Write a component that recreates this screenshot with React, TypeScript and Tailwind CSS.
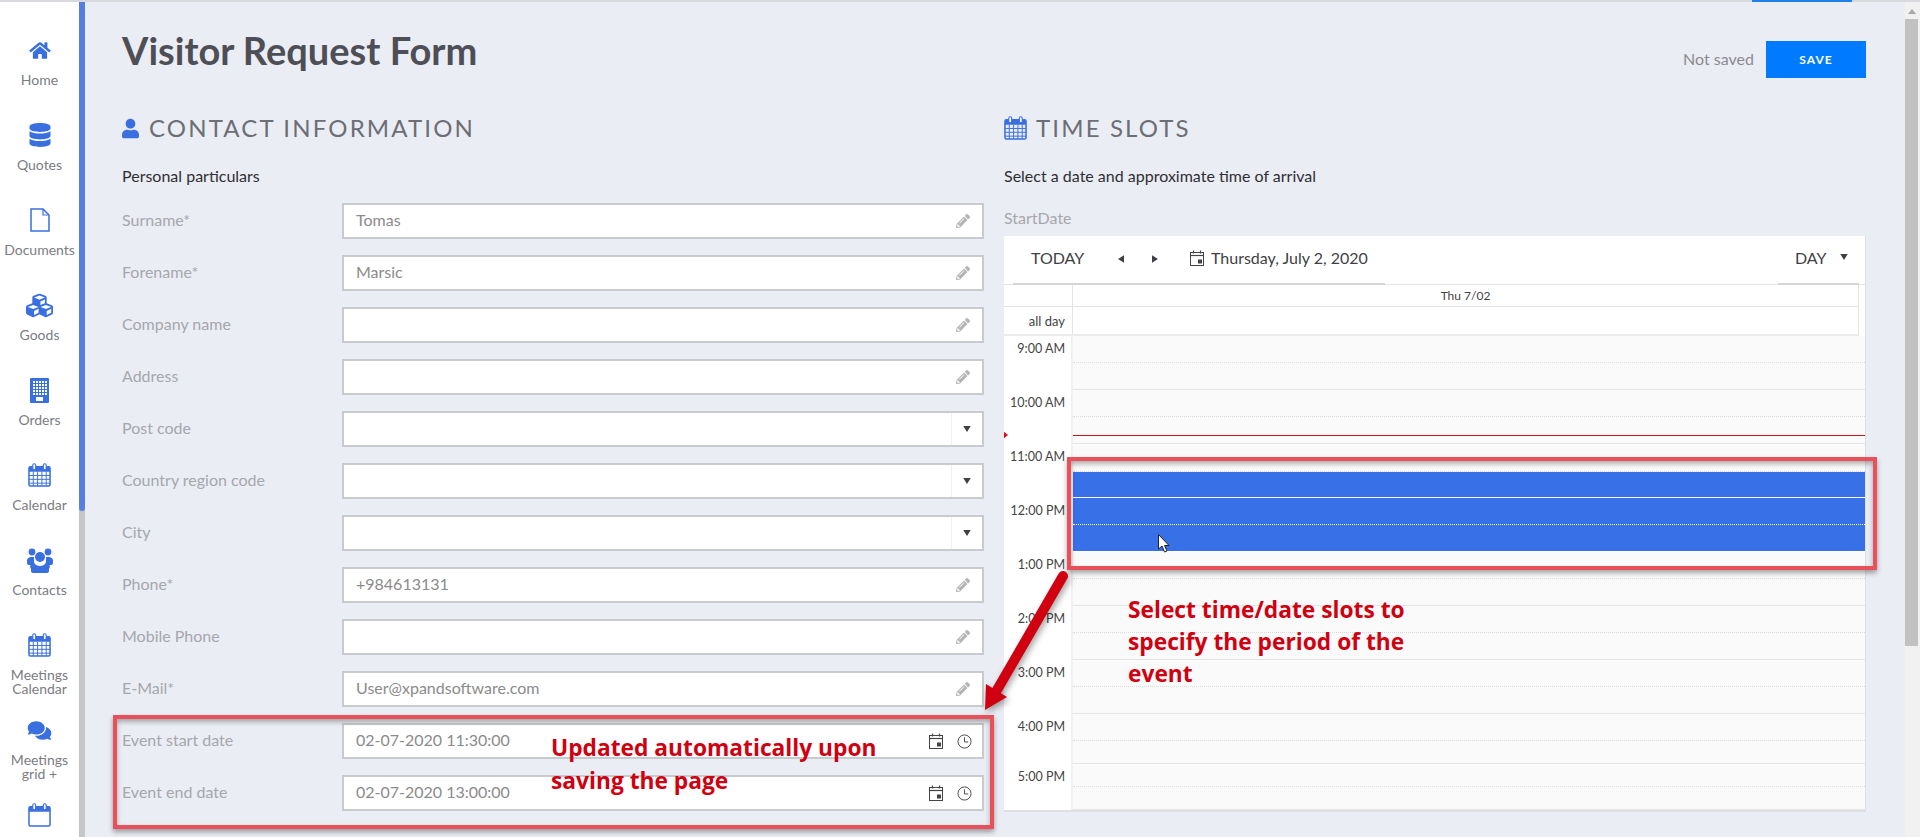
import type { ReactNode } from "react";
import { FaComments, FaCubes, FaDatabase, FaHome, FaPencilAlt, FaUser } from "react-icons/fa";

function CalendarGrid({ className, blank }: { className: string; blank?: boolean }) {
  return (
    <svg viewBox="0 0 24 25" className={className} fill="none" stroke="currentColor">
      <rect x="1" y="4" width="22" height="20" rx="1.5" strokeWidth="1.6" />
      <path d="M1 5.5a1.5 1.5 0 0 1 1.5-1.5h19A1.5 1.5 0 0 1 23 5.5V9H1z" fill="currentColor" stroke="none" />
      <rect x="5" y="0.8" width="3" height="6.4" rx="1.4" fill="white" strokeWidth="1.2" />
      <rect x="16" y="0.8" width="3" height="6.4" rx="1.4" fill="white" strokeWidth="1.2" />
      {!blank && (
        <path
          d="M1 13h22M1 17h22M1 21h22M5.5 9v15M10 9v15M14.5 9v15M19 9v15"
          strokeWidth="1"
        />
      )}
    </svg>
  );
}

function FileIcon() {
  return (
    <svg viewBox="0 0 20 24" className="w-[20px] h-[24px]" fill="none" stroke="currentColor" strokeWidth="1.5">
      <path d="M1 1h12l6 6v16H1z" />
      <path d="M13 1v6h6" strokeWidth="1.2" />
    </svg>
  );
}

function BuildingIcon() {
  const cols = [4, 7, 10, 13, 16];
  const rows = [3, 6, 9, 12, 15];
  return (
    <svg viewBox="0 0 19 25" className="w-[19px] h-[25px]">
      <rect width="19" height="25" rx="1" fill="currentColor" />
      {rows.map((y) =>
        cols.map((x) => <rect key={`${x}-${y}`} x={x - 1} y={y} width="2" height="2" fill="white" />),
      )}
      <rect x="6" y="19" width="7" height="4" fill="white" />
    </svg>
  );
}

function UsersIcon() {
  return (
    <svg viewBox="0 0 26 25" className="w-[26px] h-[25px]" fill="currentColor">
      <circle cx="5" cy="4" r="3.4" />
      <circle cx="21" cy="4" r="3.4" />
      <path d="M0 14a4 4 0 0 1 4-5h3v5a5 5 0 0 0 1 3H2a2 2 0 0 1-2-2zM26 14a4 4 0 0 0-4-5h-3v5a5 5 0 0 1-1 3h6a2 2 0 0 0 2-2z" />
      <circle cx="13" cy="9" r="5" />
      <path d="M4 21a4 4 0 0 1 3-6.500c1 2 3 3.500 6 3.500s5-1.500 6-3.500a4 4 0 0 1 3 6.500v2a2 2 0 0 1-2 2H6a2 2 0 0 1-2-2z" />
    </svg>
  );
}

function DateIcon({ className }: { className: string }) {
  return (
    <svg viewBox="0 0 14 16" className={className} fill="none" stroke="#444">
      <rect x="0.5" y="2.5" width="13" height="13" strokeWidth="1" />
      <path d="M0.5 5.5h13" strokeWidth="1.2" />
      <path d="M3.5 0.5v3M10.5 0.5v3" strokeWidth="1.2" />
      <rect x="8" y="9.500" width="4" height="4" fill="#444" stroke="none" />
    </svg>
  );
}

function ClockIcon() {
  return (
    <svg viewBox="0 0 16 16" className="w-[15px] h-[15px]" fill="none" stroke="#444">
      <circle cx="8" cy="8" r="7" strokeWidth="1" />
      <path d="M8 3.500V8.500h4" strokeWidth="1" />
    </svg>
  );
}

function Triangle({ dir, className }: { dir: "down" | "left" | "right"; className: string }) {
  const points = dir === "down" ? "0,0 10,0 5,8" : dir === "left" ? "8,0 8,10 0,5" : "0,0 8,5 0,10";
  const box = dir === "down" ? "0 0 10 8" : "0 0 8 10";
  return (
    <svg viewBox={box} className={className}>
      <polygon points={points} fill="#3f3f46" />
    </svg>
  );
}

const navItems: { label: ReactNode; icon: ReactNode }[] = [
  { label: "Home", icon: <FaHome className="w-[22px] h-[19px]" /> },
  { label: "Quotes", icon: <FaDatabase className="w-[22px] h-[24px]" /> },
  { label: "Documents", icon: <FileIcon /> },
  { label: "Goods", icon: <FaCubes className="w-[31px] h-[27px]" /> },
  { label: "Orders", icon: <BuildingIcon /> },
  { label: "Calendar", icon: <CalendarGrid className="w-[23px] h-[24px]" /> },
  { label: "Contacts", icon: <UsersIcon /> },
  { label: <>Meetings<br />Calendar</>, icon: <CalendarGrid className="w-[23px] h-[24px]" /> },
  { label: <>Meetings<br />grid +</>, icon: <FaComments className="w-[25px] h-[21px]" /> },
  { label: "", icon: <CalendarGrid className="w-[23px] h-[24px]" blank /> },
];

type FieldKind = "text" | "select" | "date";

const fields: { label: string; value?: string; kind: FieldKind }[] = [
  { label: "Surname*", value: "Tomas", kind: "text" },
  { label: "Forename*", value: "Marsic", kind: "text" },
  { label: "Company name", kind: "text" },
  { label: "Address", kind: "text" },
  { label: "Post code", kind: "select" },
  { label: "Country region code", kind: "select" },
  { label: "City", kind: "select" },
  { label: "Phone*", value: "+984613131", kind: "text" },
  { label: "Mobile Phone", kind: "text" },
  { label: "E-Mail*", value: "User@xpandsoftware.com", kind: "text" },
  { label: "Event start date", value: "02-07-2020 11:30:00", kind: "date" },
  { label: "Event end date", value: "02-07-2020 13:00:00", kind: "date" },
];

const hours: { label: string; slots: [number, number]; selected: [boolean, boolean] }[] = [
  { label: "9:00 AM", slots: [27, 27], selected: [false, false] },
  { label: "10:00 AM", slots: [27, 27], selected: [false, false] },
  { label: "11:00 AM", slots: [28, 26], selected: [false, true] },
  { label: "12:00 PM", slots: [27, 27], selected: [true, true] },
  { label: "1:00 PM", slots: [27, 27], selected: [false, false] },
  { label: "2:00 PM", slots: [27, 27], selected: [false, false] },
  { label: "3:00 PM", slots: [27, 27], selected: [false, false] },
  { label: "4:00 PM", slots: [27, 23], selected: [false, false] },
  { label: "5:00 PM", slots: [23, 23], selected: [false, false] },
];

function Field({ label, value, kind }: { label: string; value?: string; kind: FieldKind }) {
  return (
    <div className="flex items-center h-9 mb-4">
      <div className="w-[220px] text-[16px] text-[#a5a7ad] pb-[2px]">{label}</div>
      <div className="flex items-center w-[642px] h-9 bg-white border-2 border-[#c9cacd] pl-3 text-[16px] text-[#8b8b8b]">
        <span className="flex-1 pb-[2px]">{value}</span>
        {kind === "text" && (
          <div className="w-[36px] flex justify-center pr-[3px]">
            <FaPencilAlt className="w-[14px] h-[14px] text-[#b5b5b5]" />
          </div>
        )}
        {kind === "select" && (
          <div className="w-[31px] h-full flex items-center justify-center border-l border-[#f0f0f0]">
            <Triangle dir="down" className="w-[8px] h-[6px]" />
          </div>
        )}
        {kind === "date" && (
          <div className="flex items-center gap-[14px] pr-[10px]">
            <DateIcon className="w-[14px] h-[16px]" />
            <ClockIcon />
          </div>
        )}
      </div>
    </div>
  );
}

function HourRow({ label, slots, selected }: (typeof hours)[number]) {
  return (
    <div className="flex">
      <div className="w-[69px] border-r-2 border-[#f0f0f2] bg-white text-right pr-[6px] pt-[3.5px] text-[12.5px] leading-[18px] text-[#444]">
        {label}
      </div>
      <div className="flex-1">
        {slots.map((height, i) => {
          const line = i === 0 ? "border-dotted" : "border-solid";
          const color = selected[i]
            ? "bg-[#3870e8] border-white"
            : i === 0
              ? "bg-[#fafafa] border-[#dcdcdc]"
              : "bg-[#fafafa] border-[#e4e4e4]";
          return (
            <div
              key={i}
              className={`border-b ${line} ${color}`}
              style={{ height }}
            />
          );
        })}
      </div>
    </div>
  );
}

function CalendarCard() {
  return (
    <div className="relative bg-white border-r border-b-2 border-[#dedfe3] w-[862px]">
      <div className="flex justify-between h-[49px] border-b border-[#e4e4e6] text-[16px] text-[#3f3f46]">
        <div className="flex items-center ml-[9px] w-[372px] border-b-2 border-[#d5d5d8] -mb-px pl-[18px] pb-[3px]">
          <span className="w-[87px]">TODAY</span>
          <Triangle dir="left" className="w-[6px] h-[8px] mt-[2px]" />
          <Triangle dir="right" className="w-[6px] h-[8px] mt-[2px] ml-[28px]" />
          <DateIcon className="w-[14px] h-[16px] ml-[32px]" />
          <span className="ml-[7px]">Thursday, July 2, 2020</span>
        </div>
        <div className="flex items-center mr-[6px] w-[81px] border-b-2 border-[#d5d5d8] -mb-px pl-[17px] pb-[3px]">
          <span>DAY</span>
          <Triangle dir="down" className="w-[8px] h-[6px] ml-[13px] -mt-[3px]" />
        </div>
      </div>
      <div className="flex h-[22px] mr-[6px] border-r border-[#e4e4e6] border-b text-[12px] text-[#444]">
        <div className="w-[69px] border-r border-[#e4e4e6]" />
        <div className="flex-1 text-center leading-[22px]">Thu 7/02</div>
      </div>
      <div className="flex h-[29px] mr-[6px] border-r border-[#e4e4e6] border-b-2 border-b-[#ebebeb]">
        <div className="w-[69px] border-r border-[#e4e4e6] text-right pr-[7px] pt-[5px] text-[13px] leading-[18px] text-[#444]">all day</div>
        <div className="flex-1" />
      </div>
      {hours.map((hour) => (
        <HourRow key={hour.label} {...hour} />
      ))}
      <div className="absolute left-[69px] right-0 top-[199px] h-px bg-[#d0141e]" />
      <svg viewBox="0 0 5 8" className="absolute left-0 top-[195px] w-[4px] h-[8px]">
        <polygon points="0,0 5,4 0,8" fill="#d8101c" />
      </svg>
    </div>
  );
}

export default function App() {
  return (
    <div className="relative h-[837px] w-[1920px] overflow-hidden bg-[#ebedf4] font-['Lato','Noto_Sans',sans-serif]">
      <div className="flex h-[2px] bg-[#d8d9dc]">
        <div className="flex-1" />
        <div className="w-[100px] bg-[#1e7fe8]" />
        <div className="w-[68px]" />
      </div>

      <div className="flex h-[835px]">
        <nav className="w-[79px] bg-white pt-[34px] shrink-0">
          {navItems.map((item, i) => (
            <div key={i} className="h-[85px] flex flex-col items-center text-[#3a6fe0]">
              <div className="h-[28px] flex items-center justify-center">{item.icon}</div>
              <div className="mt-[9px] text-center text-[14px] leading-[14px] whitespace-nowrap text-[#7b7d83]">{item.label}</div>
            </div>
          ))}
        </nav>
        <div className="w-[6px] bg-[#c6c6c8] shrink-0">
          <div className="h-[509px] bg-[#527fe0] rounded-b-sm" />
        </div>

        <main className="flex-1 pl-[37px] pr-[39px]">
          <div className="flex justify-between h-[100px]">
            <h1 className="mt-[26px] h-[44px] text-[38px] leading-[44px] font-bold text-[#4e4f56]">Visitor Request Form</h1>
            <div className="flex items-center gap-3 h-[37px] mt-[39px]">
              <span className="text-[16px] text-[#8a8b90] pb-[2px]">Not saved</span>
              <button type="button" className="w-[100px] h-[37px] bg-[#007bff] text-white text-[12px] font-bold tracking-[1px]">SAVE</button>
            </div>
          </div>

          <div className="grid grid-cols-[862px_862px] gap-x-[20px]">
            <section>
              <h2 className="flex items-center h-[52px] gap-[10px] text-[24px] tracking-[2.15px] text-[#6c6e75]">
                <FaUser className="w-[17px] h-[21px] text-[#3a6fe0]" />
                CONTACT INFORMATION
              </h2>
              <p className="mt-[11px] mb-4 text-[16px] leading-[22px] text-[#2f2f33]">Personal particulars</p>
              {fields.map((field) => (
                <Field key={field.label} {...field} />
              ))}
            </section>

            <section>
              <h2 className="flex items-center h-[52px] gap-[9px] text-[24px] tracking-[2.15px] text-[#6c6e75]">
                <CalendarGrid className="w-[23px] h-[24px] text-[#3a6fe0]" />
                TIME SLOTS
              </h2>
              <p className="mt-[11px] text-[16px] leading-[22px] text-[#2f2f33]">Select a date and approximate time of arrival</p>
              <p className="mt-[22px] mb-[9px] text-[16px] leading-[18px] text-[#a5a7ad]">StartDate</p>
              <CalendarCard />
            </section>
          </div>
        </main>

        <div className="relative w-[15px] bg-[#f1f1f1] shrink-0">
          <svg viewBox="0 0 10 6" className="absolute left-[3px] top-[7px] w-[8px] h-[5px]">
            <polygon points="5,0 10,6 0,6" fill="#a8a8a8" />
          </svg>
          <div className="absolute left-0 top-[17px] w-[13px] h-[627px] bg-[#c1c1c1]" />
        </div>
      </div>

      {/* annotations pasted over the screenshot */}
      <div className="absolute left-[113px] top-[715px] w-[881px] h-[114px] border-4 border-[#e9505a] shadow-[0_3px_5px_rgba(0,0,0,0.35),inset_0_3px_5px_rgba(0,0,0,0.3)]" />
      <div className="absolute left-[1067px] top-[457px] w-[810px] h-[113px] border-4 border-[#e9505a] shadow-[0_3px_5px_rgba(0,0,0,0.35),inset_0_3px_5px_rgba(0,0,0,0.3)]" />
      <svg viewBox="0 0 100 150" className="absolute left-[975px] top-[565px] w-[100px] h-[150px] drop-shadow-[2px_3px_3px_rgba(0,0,0,0.35)]">
        <path d="M88 11 L22 125" stroke="#d00010" strokeWidth="10" strokeLinecap="round" fill="none" />
        <polygon points="10,145 11,119 32,132" fill="#d00010" />
      </svg>
      <div className="absolute left-[551px] top-[731px] font-['Open_Sans',sans-serif] font-bold text-[22.75px] leading-[33px] text-[#d00010]">
        Updated automatically upon<br />saving the page
      </div>
      <div className="absolute left-[1128px] top-[594px] font-['Open_Sans',sans-serif] font-bold text-[22.75px] leading-[32px] text-[#d00010]">
        Select time/date slots to<br />specify the period of the<br />event
      </div>
      <svg viewBox="0 0 12 19" className="absolute left-[1158px] top-[534px] w-[12px] h-[19px]">
        <polygon points="0.5,0.5 0.5,15 4,12 6.5,18 9,17 6.5,11.5 11,11.5" fill="white" stroke="#222" strokeWidth="1" />
      </svg>
    </div>
  );
}
